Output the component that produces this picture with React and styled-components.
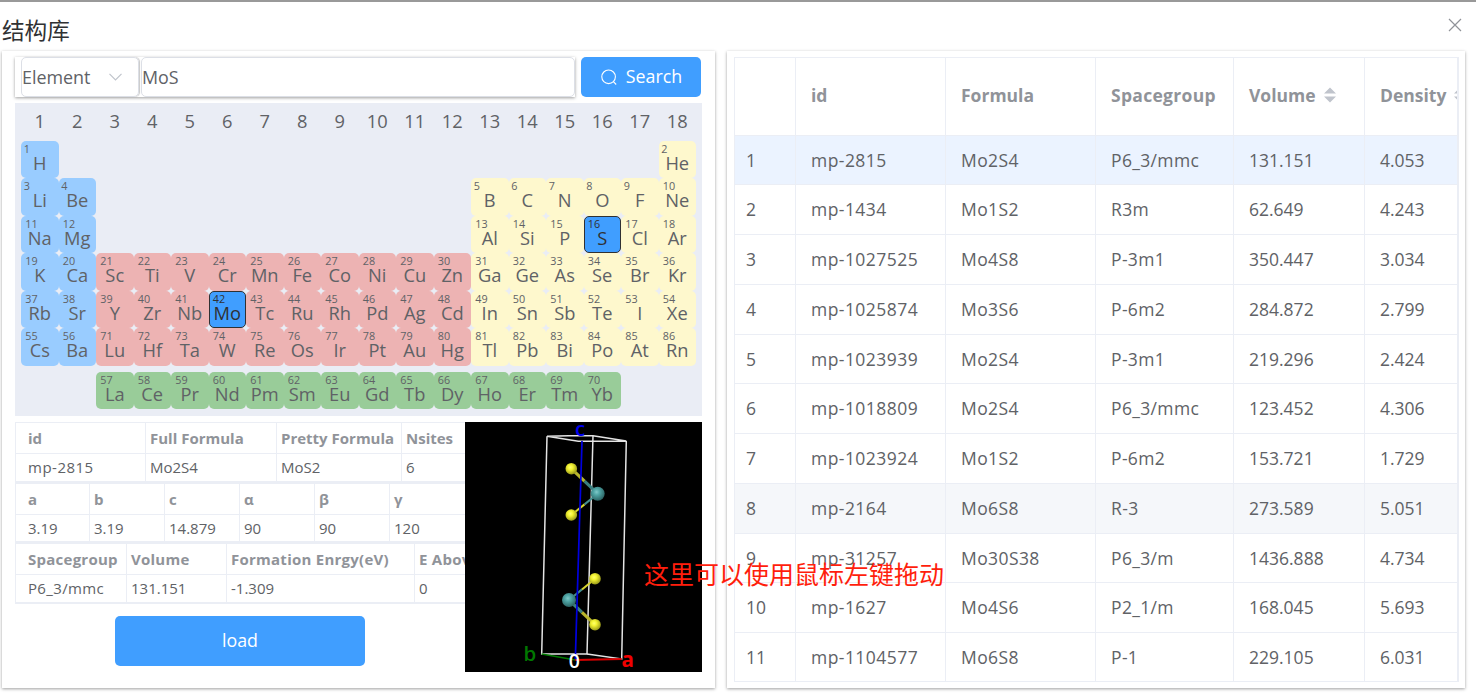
import React from "react";
import styled, { createGlobalStyle } from "styled-components";

const Global = createGlobalStyle`
  * { box-sizing: border-box; }
  body {
    margin: 0;
    background: #fff;
    color: #606266;
    font-family: "Open Sans", "Noto Sans CJK SC", sans-serif;
    font-size: 17.5px;
    overflow: hidden;
  }
`;

const Dialog = styled.div`
  width: 1476px;
  height: 699px;
  border-top: 2px solid #999;
  overflow: hidden;
`;

const TitleBar = styled.header`
  height: 49px;
  padding: 8px 14px 0 2px;
  display: flex;
  justify-content: space-between;
  align-items: flex-start;
`;

const Title = styled.h1`
  margin: 0;
  font: 400 22.6px/40px "Noto Sans CJK SC", sans-serif;
  color: #303133;
`;

const CloseButton = styled.button`
  border: 0;
  padding: 0;
  margin-top: 8px;
  width: 14px;
  height: 14px;
  background: none;
  svg { display: block; }
`;

const Body = styled.main`
  display: flex;
  gap: 12px;
  padding: 0 11px 0 2px;
`;

const Panel = styled.section`
  width: ${(p) => p.$width}px;
  height: 637px;
  padding: ${(p) => p.$pad};
  background: #fff;
  box-shadow: 0 1px 3px rgba(0, 0, 0, 0.38);
`;

const SearchRow = styled.div`
  display: flex;
  gap: 6px;
  height: 40px;
  margin-bottom: 6px;
`;

const InputGroup = styled.div`
  display: flex;
  width: 560px;
  height: 40px;
  padding-left: 6px;
  gap: 2px;
  box-shadow: 0 1px 3px rgba(0, 0, 0, 0.38);
`;

const Field = styled.div`
  display: flex;
  align-items: center;
  width: ${(p) => p.$width}px;
  padding: 0 16px 0 0;
  justify-content: space-between;
  border: 1px solid #dcdfe6;
  border-radius: 5px;
  box-shadow: ${(p) => (p.$divided ? "1px 0 1px rgba(0,0,0,.22)" : "none")};
  font-size: 17.9px;
`;

const Button = styled.button`
  display: flex;
  align-items: center;
  justify-content: center;
  gap: 9px;
  width: ${(p) => p.$width}px;
  height: ${(p) => p.$height}px;
  padding: 0 0 2px;
  border: 0;
  border-radius: 5px;
  background: #409eff;
  color: #fff;
  font: 400 17.8px "Open Sans", sans-serif;
  svg { margin: 2px 0 0 1px; }
`;

const Periodic = styled.div`
  width: 687px;
  height: 313px;
  margin-bottom: 6px;
  padding: 0.25px 6px;
  background: #eaedf5;
  display: grid;
  grid-template-columns: repeat(18, 37.5px);
  grid-template-rows: repeat(7, 37.5px) 6px 37.5px;
`;

const GroupNumber = styled.div`
  text-align: center;
  font-size: 18.3px;
  line-height: 35px;
`;

const tones = { s: "#99ccff", d: "#edb3b3", p: "#fef8cd", f: "#99cc99" };

const ElementCell = styled.div`
  grid-column: ${(p) => p.$col};
  grid-row: ${(p) => p.$row};
  border-radius: 5px;
  background: ${(p) => (p.$active ? "#409eff" : tones[p.$tone])};
  border: 1px solid ${(p) => (p.$active ? "#303133" : "transparent")};
  color: ${(p) => (p.$active ? "#303133" : "#606266")};
  display: flex;
  flex-direction: column;
`;

const AtomicNumber = styled.span`
  height: 13px;
  padding-left: ${(p) => (p.$short ? 1.8 : 3.3)}px;
  font-size: 10.8px;
  line-height: 14px;
`;

const Symbol = styled.span`
  text-align: center;
  font-size: 18.3px;
  line-height: 15px;
`;

const Lower = styled.div`
  display: flex;
`;

const Details = styled.div`
  width: 450px;
  overflow: hidden;
`;

const MiniTable = styled.div`
  width: 520px;
  height: 60.5px;
  border: 1px solid #ebeef5;
  border-bottom-width: 2px;
  display: grid;
  grid-template-columns: ${(p) => p.$cols};
  grid-template-rows: 31px 1fr;
`;

const MiniCell = styled.div`
  display: flex;
  align-items: center;
  padding-left: ${(p) => (p.$first ? 12 : 4)}px;
  white-space: nowrap;
  font-size: 15px;
  font-weight: ${(p) => (p.$head ? 700 : 400)};
  letter-spacing: ${(p) => p.$track || 0}px;
  color: ${(p) => (p.$head ? "#909399" : "#606266")};
  border-right: 1px solid #ebeef5;
  border-bottom: ${(p) => (p.$head ? "1px solid #ebeef5" : "0")};
`;

const LoadRow = styled.div`
  padding: 12px 0 0 100px;
`;

const Viewer = styled.div`
  width: 237px;
  height: 250px;
  background: #000;
  svg { display: block; }
`;

const Results = styled.div`
  width: 725px;
  height: 625px;
  border: 1px solid #ebeef5;
  border-right-width: 2px;
  overflow: hidden;
`;

const ResultRow = styled.div`
  display: grid;
  grid-template-columns: 61px 150px 150px 138px 131px 160px;
  width: 790px;
  height: ${(p) => (p.$head ? 77.7 : 49.75)}px;
  background: ${(p) => p.$bg || "#fff"};
  font-weight: ${(p) => (p.$head ? 700 : 400)};
  color: ${(p) => (p.$head ? "#909399" : "#606266")};
`;

const ResultCell = styled.div`
  display: flex;
  align-items: center;
  gap: 8px;
  padding-left: ${(p) => (p.$first ? 11 : 15)}px;
  padding-bottom: ${(p) => (p.$head ? 2 : 1)}px;
  letter-spacing: ${(p) => p.$track || 0}px;
  white-space: nowrap;
  border-right: 1px solid #ebeef5;
  border-bottom: 1px solid #ebeef5;
`;

const Annotation = styled.div`
  position: absolute;
  left: 644px;
  top: 554px;
  font: 400 25px/38px "Noto Sans CJK SC", sans-serif;
  color: #ff1e0c;
  white-space: nowrap;
`;

const runs = [
  [1, 2, 1, "s", "H"], [2, 2, 18, "p", "He"],
  [3, 3, 1, "s", "Li Be"], [5, 3, 13, "p", "B C N O F Ne"],
  [11, 4, 1, "s", "Na Mg"], [13, 4, 13, "p", "Al Si P S Cl Ar"],
  [19, 5, 1, "s", "K Ca"], [21, 5, 3, "d", "Sc Ti V Cr Mn Fe Co Ni Cu Zn"], [31, 5, 13, "p", "Ga Ge As Se Br Kr"],
  [37, 6, 1, "s", "Rb Sr"], [39, 6, 3, "d", "Y Zr Nb Mo Tc Ru Rh Pd Ag Cd"], [49, 6, 13, "p", "In Sn Sb Te I Xe"],
  [55, 7, 1, "s", "Cs Ba"], [71, 7, 3, "d", "Lu Hf Ta W Re Os Ir Pt Au Hg"], [81, 7, 13, "p", "Tl Pb Bi Po At Rn"],
  [57, 9, 3, "f", "La Ce Pr Nd Pm Sm Eu Gd Tb Dy Ho Er Tm Yb"],
];

const elements = runs.flatMap(([z, row, col, tone, names]) =>
  names.split(" ").map((name, i) => ({ z: z + i, row, col: col + i, tone, name }))
);

const selected = ["Mo", "S"];

const details = [
  { cols: "130px 131px 125px 133px", track: 0.5, head: ["id", "Full Formula", "Pretty Formula", "Nsites"], row: ["mp-2815", "Mo2S4", "MoS2", "6"] },
  { cols: "74px 75px 75px 75px 75px 144px", track: 0, head: ["a", "b", "c", "α", "β", "γ"], row: ["3.19", "3.19", "14.879", "90", "90", "120"] },
  { cols: "111px 100px 188px 119px", track: 0.35, headTrack: 0.25, head: ["Spacegroup", "Volume", "Formation Enrgy(eV)", "E Above Hull"], row: ["P6_3/mmc", "131.151", "-1.309", "0"] },
];

const results = [
  ["mp-2815", "Mo2S4", "P6_3/mmc", "131.151", "4.053"],
  ["mp-1434", "Mo1S2", "R3m", "62.649", "4.243"],
  ["mp-1027525", "Mo4S8", "P-3m1", "350.447", "3.034"],
  ["mp-1025874", "Mo3S6", "P-6m2", "284.872", "2.799"],
  ["mp-1023939", "Mo2S4", "P-3m1", "219.296", "2.424"],
  ["mp-1018809", "Mo2S4", "P6_3/mmc", "123.452", "4.306"],
  ["mp-1023924", "Mo1S2", "P-6m2", "153.721", "1.729"],
  ["mp-2164", "Mo6S8", "R-3", "273.589", "5.051"],
  ["mp-31257", "Mo30S38", "P6_3/m", "1436.888", "4.734"],
  ["mp-1627", "Mo4S6", "P2_1/m", "168.045", "5.693"],
  ["mp-1104577", "Mo6S8", "P-1", "229.105", "6.031"],
];

const columnTrack = [0.45, 0.4, 0.35, 0, 0];

const rowTint = { 0: "#ebf3ff", 7: "#f5f7fa" };

const SortIcon = () => (
  <svg width="12" height="16" viewBox="0 0 12 16" fill="#c0c4cc">
    <path d="M0 6.5 6 .5l6 6zM0 9.5h12l-6 6z" />
  </svg>
);

const Structure = () => (
  <svg width="237" height="250" viewBox="0 0 237 250">
    <defs>
      <radialGradient id="sulfur" cx=".42" cy=".38" r=".62">
        <stop offset="0" stopColor="#ffff70" />
        <stop offset=".35" stopColor="#f4f432" />
        <stop offset="1" stopColor="#99991a" />
      </radialGradient>
      <radialGradient id="moly" cx=".42" cy=".38" r=".62">
        <stop offset="0" stopColor="#80c8c8" />
        <stop offset=".35" stopColor="#50a6a6" />
        <stop offset="1" stopColor="#2c6464" />
      </radialGradient>
    </defs>
    <g fill="none" stroke="#e4e4e4" strokeWidth="1.5">
      <path d="M82 14.3 76.7 232H122L128 13.7" />
      <path d="M82 14.3 113.3 19.3 161.3 19 128 13.7 104 13.7zM161.3 19 156.7 237 122 232" />
    </g>
    <g fill="none" strokeWidth="3.2">
      <path d="M106.3 46.7 119.5 59.2" stroke="#b8b52c" />
      <path d="M119.5 59.2 132.7 71.7" stroke="#3b7f80" />
      <path d="M104 178 117 190.4" stroke="#3b7f80" />
      <path d="M117 190.4 130 202.7" stroke="#b8b52c" />
    </g>
    <g fill="none" strokeWidth="2">
      <path d="M106.3 93 119.5 82.4" stroke="#d8d530" />
      <path d="M119.5 82.4 132.7 71.7" stroke="#458f90" />
      <path d="M104 178 117 167.4" stroke="#458f90" />
      <path d="M117 167.4 130 156.7" stroke="#d8d530" />
    </g>
    <path d="M117 19 110.3 238" stroke="#0000e0" strokeWidth="1.7" />
    <path d="M76.7 232 110.3 238" stroke="#007a00" strokeWidth="1.5" />
    <path d="M110.3 238 156.7 237" stroke="#d80000" strokeWidth="1.8" />
    <g fill="url(#sulfur)">
      <circle cx="106.3" cy="46.7" r="5.8" />
      <circle cx="106.3" cy="93" r="5.8" />
      <circle cx="130" cy="156.7" r="5.8" />
      <circle cx="130" cy="202.7" r="5.8" />
    </g>
    <g fill="url(#moly)">
      <circle cx="132.7" cy="71.7" r="7" />
      <circle cx="104" cy="178" r="7" />
    </g>
    <g fontFamily="Open Sans, sans-serif" fontWeight="600" fontSize="20.5" textAnchor="middle">
      <text x="115" y="13.5" fill="#0000f0">c</text>
      <text x="65" y="239" fill="#007800">b</text>
      <text x="109.3" y="246" fill="#fff" fontSize="19.5">0</text>
      <text x="162.7" y="245" fill="#f00000" fontWeight="700">a</text>
    </g>
  </svg>
);

export default function App() {
  return (
    <>
      <Global />
      <Dialog>
        <TitleBar>
          <Title>结构库</Title>
          <CloseButton aria-label="Close">
            <svg width="14" height="14" viewBox="0 0 14 14" stroke="#909399" strokeWidth="1.2">
              <path d="M1 1l12 12M13 1L1 13" />
            </svg>
          </CloseButton>
        </TitleBar>
        <Body>
          <Panel $width={713} $pad="6px 13px">
            <SearchRow>
              <InputGroup>
                <Field $width={118} $divided>
                  Element
                  <svg width="13" height="8" viewBox="0 0 13 8" fill="none" stroke="#c0c4cc" strokeWidth="1.2">
                    <path d="M.5.8 6.5 7l6-6.2" />
                  </svg>
                </Field>
                <Field $width={434}>MoS</Field>
              </InputGroup>
              <Button $width={120} $height={40}>
                <svg width="16" height="16" viewBox="0 0 16 16" fill="none" stroke="#fff" strokeWidth="1.1">
                  <circle cx="7.6" cy="7.8" r="6.8" />
                  <path d="M12.4 12.7l2.8 2.8" />
                </svg>
                Search
              </Button>
            </SearchRow>
            <Periodic>
              {Array.from({ length: 18 }, (_, i) => (
                <GroupNumber key={i}>{i + 1}</GroupNumber>
              ))}
              {elements.map((e) => (
                <ElementCell key={e.z} $col={e.col} $row={e.row} $tone={e.tone} $active={selected.includes(e.name)}>
                  <AtomicNumber $short={e.z < 10}>{e.z}</AtomicNumber>
                  <Symbol>{e.name}</Symbol>
                </ElementCell>
              ))}
            </Periodic>
            <Lower>
              <Details>
                {details.map((t) => (
                  <MiniTable key={t.head[0]} $cols={t.cols}>
                    {t.head.map((h, i) => (
                      <MiniCell key={h} $head $first={i === 0} $track={t.headTrack}>{h}</MiniCell>
                    ))}
                    {t.row.map((v, i) => (
                      <MiniCell key={i} $first={i === 0} $track={i === 0 ? t.track : 0}>{v}</MiniCell>
                    ))}
                  </MiniTable>
                ))}
                <LoadRow>
                  <Button $width={250} $height={50}>load</Button>
                </LoadRow>
              </Details>
              <Viewer>
                <Structure />
              </Viewer>
            </Lower>
          </Panel>
          <Panel $width={738} $pad="6px 7px">
            <Results>
              <ResultRow $head>
                <ResultCell $head $first />
                <ResultCell $head>id</ResultCell>
                <ResultCell $head>Formula</ResultCell>
                <ResultCell $head $track={0.3}>Spacegroup</ResultCell>
                <ResultCell $head>Volume<SortIcon /></ResultCell>
                <ResultCell $head>Density<SortIcon /></ResultCell>
              </ResultRow>
              {results.map((r, i) => (
                <ResultRow key={r[0]} $bg={rowTint[i]}>
                  <ResultCell $first>{i + 1}</ResultCell>
                  {r.map((v, j) => (
                    <ResultCell key={j} $track={columnTrack[j]}>{v}</ResultCell>
                  ))}
                </ResultRow>
              ))}
            </Results>
          </Panel>
        </Body>
        <Annotation>这里可以使用鼠标左键拖动</Annotation>
      </Dialog>
    </>
  );
}
